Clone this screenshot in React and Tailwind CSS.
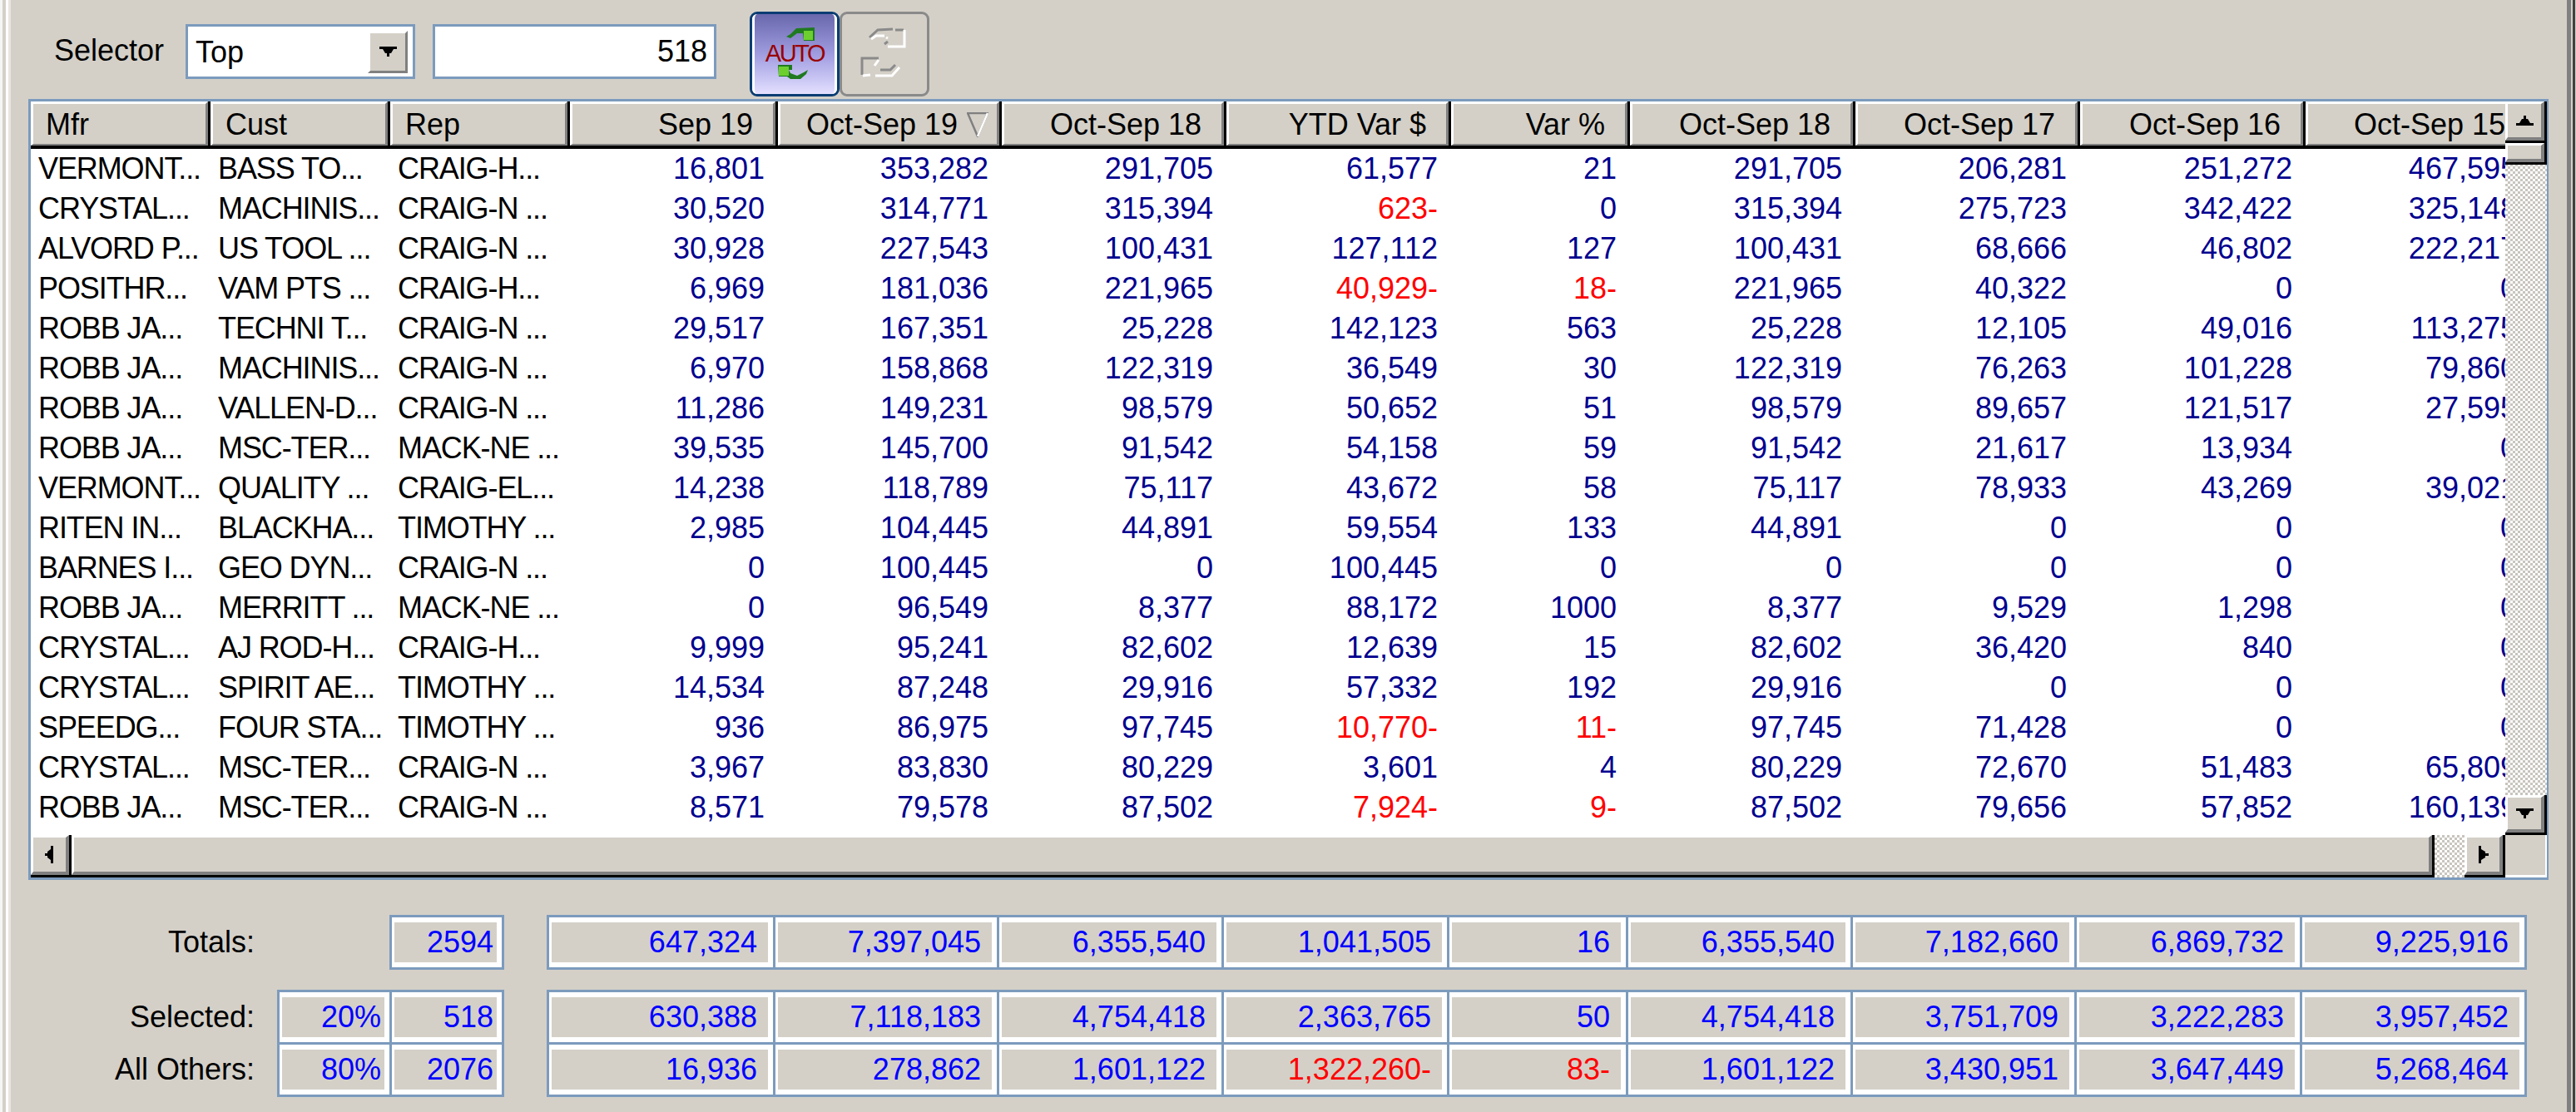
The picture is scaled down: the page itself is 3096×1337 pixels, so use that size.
import React from "react";

const headers = [
  ["Mfr", "l"], ["Cust", "l"], ["Rep", "l"], ["Sep 19", "r"], ["Oct-Sep 19", "s"], ["Oct-Sep 18", "r"],
  ["YTD Var $", "r"], ["Var %", "r"], ["Oct-Sep 18", "r"], ["Oct-Sep 17", "r"], ["Oct-Sep 16", "r"], ["Oct-Sep 15", "r"],
];

const rows = [
  ["VERMONT...", "BASS TO...", "CRAIG-H...", "16,801", "353,282", "291,705", "61,577", "21", "291,705", "206,281", "251,272", "467,595"],
  ["CRYSTAL...", "MACHINIS...", "CRAIG-N ...", "30,520", "314,771", "315,394", "623-", "0", "315,394", "275,723", "342,422", "325,148"],
  ["ALVORD P...", "US TOOL ...", "CRAIG-N ...", "30,928", "227,543", "100,431", "127,112", "127", "100,431", "68,666", "46,802", "222,217"],
  ["POSITHR...", "VAM PTS ...", "CRAIG-H...", "6,969", "181,036", "221,965", "40,929-", "18-", "221,965", "40,322", "0", "0"],
  ["ROBB JA...", "TECHNI T...", "CRAIG-N ...", "29,517", "167,351", "25,228", "142,123", "563", "25,228", "12,105", "49,016", "113,275"],
  ["ROBB JA...", "MACHINIS...", "CRAIG-N ...", "6,970", "158,868", "122,319", "36,549", "30", "122,319", "76,263", "101,228", "79,860"],
  ["ROBB JA...", "VALLEN-D...", "CRAIG-N ...", "11,286", "149,231", "98,579", "50,652", "51", "98,579", "89,657", "121,517", "27,595"],
  ["ROBB JA...", "MSC-TER...", "MACK-NE ...", "39,535", "145,700", "91,542", "54,158", "59", "91,542", "21,617", "13,934", "0"],
  ["VERMONT...", "QUALITY ...", "CRAIG-EL...", "14,238", "118,789", "75,117", "43,672", "58", "75,117", "78,933", "43,269", "39,021"],
  ["RITEN IN...", "BLACKHA...", "TIMOTHY ...", "2,985", "104,445", "44,891", "59,554", "133", "44,891", "0", "0", "0"],
  ["BARNES I...", "GEO DYN...", "CRAIG-N ...", "0", "100,445", "0", "100,445", "0", "0", "0", "0", "0"],
  ["ROBB JA...", "MERRITT ...", "MACK-NE ...", "0", "96,549", "8,377", "88,172", "1000", "8,377", "9,529", "1,298", "0"],
  ["CRYSTAL...", "AJ ROD-H...", "CRAIG-H...", "9,999", "95,241", "82,602", "12,639", "15", "82,602", "36,420", "840", "0"],
  ["CRYSTAL...", "SPIRIT AE...", "TIMOTHY ...", "14,534", "87,248", "29,916", "57,332", "192", "29,916", "0", "0", "0"],
  ["SPEEDG...", "FOUR STA...", "TIMOTHY ...", "936", "86,975", "97,745", "10,770-", "11-", "97,745", "71,428", "0", "0"],
  ["CRYSTAL...", "MSC-TER...", "CRAIG-N ...", "3,967", "83,830", "80,229", "3,601", "4", "80,229", "72,670", "51,483", "65,809"],
  ["ROBB JA...", "MSC-TER...", "CRAIG-N ...", "8,571", "79,578", "87,502", "7,924-", "9-", "87,502", "79,656", "57,852", "160,139"],
];

const gridCols = "grid grid-cols-[216px_216px_216px_250px_269px_270px_270px_215px_271px_270px_271px_270px]";
const dataWidths = ["w-[272px]", "w-[269px]", "w-[270px]", "w-[271px]", "w-[215px]", "w-[270px]", "w-[269px]", "w-[271px]", "w-[270px]"];

function Tri({ dir, className }) {
  const pts = {
    up: "0,12 21,12 21,9 17,9 14,4 12,4 12,0 9,0 9,4 7,4 4,9 0,9",
    down: "0,0 21,0 21,3 17,3 14,8 12,8 12,12 9,12 9,8 7,8 4,3 0,3",
  };
  if (dir === "left")
    return (
      <svg width="11" height="21" viewBox="0 0 11 21" className={className}>
        <polygon points="10,0 10,21 7,21 7,17 3,14 3,12 0,12 0,9 3,9 3,7 7,4 7,0" fill="#000" />
      </svg>
    );
  if (dir === "right")
    return (
      <svg width="12" height="21" viewBox="0 0 12 21" className={className}>
        <polygon points="0,0 0,21 3,21 3,17 8,14 8,12 12,12 12,9 8,9 8,7 3,4 3,0" fill="#000" />
      </svg>
    );
  return (
    <svg width="21" height="12" viewBox="0 0 21 12" className={className}>
      <polygon points={pts[dir]} fill="#000" />
    </svg>
  );
}

function Header({ label, kind }) {
  const align =
    kind === "l" ? "justify-start pl-[15px]" : kind === "s" ? "justify-end pr-[10px]" : "justify-end pr-[24px]";
  return (
    <div className="h-[57px] border-r-[3px] border-b-[4px] border-black">
      <div className={`h-full flex items-center pt-[2px] ${align} border-t-[3px] border-l-[3px] border-r-[3px] border-b-[2px] border-t-white border-l-white border-r-[#808080] border-b-[#808080] bg-[#d4d0c8]`}>
        <span>{label}</span>
        {kind === "s" && (
          <svg width="26" height="30" viewBox="0 0 26 30" className="ml-[11px] shrink-0">
            <polygon points="1,1 25,1 13,29" fill="none" stroke="#808080" strokeWidth="2.5" />
            <polyline points="25,1 13,29" fill="none" stroke="#ffffff" strokeWidth="2.5" />
          </svg>
        )}
      </div>
    </div>
  );
}

function Row({ cells }) {
  return (
    <div className={`${gridCols} h-12 leading-[48px]`}>
      {cells.map((c, i) => {
        if (i < 3)
          return (
            <div key={i} className="pl-[9px] text-black tracking-[-1.1px] whitespace-nowrap overflow-hidden">
              {c}
            </div>
          );
        const red = (i === 6 || i === 7) && c.endsWith("-");
        return (
          <div key={i} className={`pr-[16px] text-right whitespace-nowrap ${red ? "text-[#ff0000]" : "text-[#00008f]"}`}>
            {c}
          </div>
        );
      })}
    </div>
  );
}

function Cell({ value, width, red, tight }) {
  return (
    <div className={`${width} h-[60px] border-r-[3px] border-[#7c9bbd] shrink-0`}>
      <div className={`h-full border-t-[6px] border-b-[6px] border-l-[3px] border-r-[6px] border-white bg-[#d4d0c8] flex items-center justify-end leading-none whitespace-nowrap ${tight ? "pr-[4px]" : "pr-[13px]"}`}>
        <span className={red ? "text-[#ff0000]" : "text-[#0000ff]"}>{value}</span>
      </div>
    </div>
  );
}

function BoxGroup({ rows, widths, tight }) {
  return (
    <div className="border-t-[3px] border-l-[3px] border-[#7c9bbd] shrink-0">
      {rows.map((r, i) => (
        <div key={i} className="flex border-b-[3px] border-[#7c9bbd]">
          {r.map((v, j) => (
            <Cell key={j} value={v} width={widths[j]} red={v.endsWith("-")} tight={tight} />
          ))}
        </div>
      ))}
    </div>
  );
}

function ScrollButton({ dir, className }) {
  return (
    <div className={`border-r-[3px] border-b-[3px] border-black shrink-0 ${className}`}>
      <div className="h-full border-t-[3px] border-l-[3px] border-r-[4px] border-b-[4px] border-t-white border-l-white border-r-[#808080] border-b-[#808080] bg-[#d4d0c8] flex items-center justify-center">
        {dir && <Tri dir={dir} />}
      </div>
    </div>
  );
}

function AutoIcon() {
  return (
    <svg width="108" height="102" viewBox="901 14 108 102" className="absolute inset-0">
      <g>
        <path d="M945 44 L950 41 L957 34 L979 33 L979 49 L966 49 L965 40 L958 40 L950 46 Z" fill="#1f7a1f" />
        <rect x="966" y="37" width="11" height="11" fill="#6ccf2f" />
        <path d="M935 78 L952 78 L952 84 L948 84 L950 88 L958 91 L966 87 L971 84 L969 89 L962 95 L950 95 L946 92 L936 92 Z" fill="#1f7a1f" />
        <rect x="936" y="80" width="12" height="11" fill="#6ccf2f" />
      </g>
    </svg>
  );
}

function DisabledIcon() {
  return (
    <svg width="108" height="102" viewBox="1009 14 108 102" className="absolute inset-0">
      <g fill="none" strokeWidth="3">
        <path d="M1045 45 L1055 36 L1073 35" stroke="#8a8a8a" />
        <path d="M1076 36 L1086 36" stroke="#8a8a8a" />
        <path d="M1047 47 L1053 43 L1063 43" stroke="#ffffff" />
        <path d="M1065 45 L1067 46" stroke="#ffffff" />
        <path d="M1067 50 L1063 53" stroke="#8a8a8a" />
        <path d="M1087 36 L1087 56 L1067 56" stroke="#ffffff" />
        <path d="M1036 90 L1036 70 L1056 70" stroke="#8a8a8a" />
        <path d="M1037 91 L1046 90" stroke="#ffffff" />
        <path d="M1052 91 L1072 91 L1081 81" stroke="#ffffff" />
        <path d="M1058 84 L1070 84 L1076 78" stroke="#8a8a8a" />
        <path d="M1056 72 L1051 79" stroke="#ffffff" />
      </g>
    </svg>
  );
}

export default function App() {
  const wLeft = ["w-[135px]", "w-[135px]"];
  return (
    <div className="w-[3096px] h-[1337px] overflow-hidden flex bg-[#d4d0c8] font-['Liberation_Sans',sans-serif] text-[36px] text-black">
      {/* window frame, left */}
      <div className="w-[13px] shrink-0 flex">
        <div className="w-[3px] bg-[#f4f6f6]" />
        <div className="w-[4px] bg-[#d4d0c8]" />
        <div className="w-[3px] bg-white" />
        <div className="w-[3px] bg-[#e8e6e0]" />
      </div>

      <div className="w-[3072px] shrink-0 flex flex-col">
        {/* selector bar */}
        <div className="mt-[14px] h-[102px] flex items-center shrink-0">
          <span className="ml-[52px] w-[158px] -mt-[8px] leading-none">Selector</span>
          <div className="w-[276px] h-[66px] -mt-[6px] border-[3px] border-[#7c9bbd] bg-white flex items-center pl-[9px] pr-[6px]">
            <span className="flex-1 leading-none mt-[2px]">Top</span>
            <div className="w-[48px] h-[51px] border-l-[3px] border-t-[3px] border-r-[3px] border-b-[3px] border-l-white border-t-white border-r-[#808080] border-b-[#808080] flex items-center justify-center bg-[#d4d0c8]">
              <Tri dir="down" />
            </div>
          </div>
          <div className="ml-[21px] w-[341px] h-[66px] -mt-[6px] border-[3px] border-[#7c9bbd] bg-white flex items-center justify-end pr-[8px] leading-none">
            518
          </div>
          <div className="ml-[40px] w-[108px] h-[102px] relative rounded-[9px] border-[3px] border-[#0a3d73] shrink-0 bg-[#d4d0c8]">
            <div className="h-full rounded-[6px] border-x-[3px] border-white bg-linear-to-b from-[#6a68ad] via-[#a09ce0] to-[#e4e0ff]" />
            <div className="absolute -inset-[3px]">
              <AutoIcon />
            </div>
            <div className="absolute inset-x-0 top-[33px] text-center text-[29px] leading-[29px] tracking-[-2.4px] text-[#990000]">
              AUTO
            </div>
          </div>
          <div className="w-[108px] h-[102px] relative rounded-[9px] border-[3px] border-[#8a8a8a] shrink-0">
            <div className="absolute -inset-[3px]">
              <DisabledIcon />
            </div>
          </div>
        </div>

        {/* table */}
        <div className="mt-[3px] ml-[21px] w-[3029px] h-[939px] shrink-0 border-[3px] border-r-[2px] border-[#7c9bbd] flex flex-col">
          <div className="h-[882px] flex shrink-0">
            <div className="w-[2974px] shrink-0 overflow-hidden bg-white">
              <div className={gridCols}>
                {headers.map(([l, k], i) => (
                  <Header key={i} label={l} kind={k} />
                ))}
              </div>
              {rows.map((r, i) => (
                <Row key={i} cells={r} />
              ))}
            </div>
            <div className="w-[50px] shrink-0 flex flex-col bg-[repeating-conic-gradient(#c8c5be_0_25%,#ffffff_0_50%)] bg-[length:6px_6px]">
              <ScrollButton dir="up" className="h-[50px]" />
              <ScrollButton className="h-[26px]" />
              <div className="flex-1" />
              <ScrollButton dir="down" className="h-[48px]" />
            </div>
          </div>
          <div className="h-[51px] flex shrink-0">
            <ScrollButton dir="left" className="w-[49px]" />
            <ScrollButton className="w-[2840px]" />
            <div className="w-[36px] shrink-0 bg-[repeating-conic-gradient(#c8c5be_0_25%,#ffffff_0_50%)] bg-[length:6px_6px]" />
            <ScrollButton dir="right" className="w-[49px]" />
            <div className="flex-1 border-r-[2px] border-b-[3px] border-white" />
          </div>
        </div>

        {/* totals */}
        <div className="mt-[42px] flex shrink-0 h-[66px] items-start">
          <div className="w-[293px] text-right leading-none h-[66px] flex items-center justify-end shrink-0">Totals:</div>
          <div className="ml-[162px]">
            <BoxGroup rows={[["2594"]]} widths={["w-[135px]"]} tight />
          </div>
          <div className="ml-[51px]">
            <BoxGroup rows={[["647,324", "7,397,045", "6,355,540", "1,041,505", "16", "6,355,540", "7,182,660", "6,869,732", "9,225,916"]]} widths={dataWidths} />
          </div>
        </div>

        <div className="mt-[24px] flex shrink-0 items-start">
          <div className="w-[293px] shrink-0 text-right leading-none">
            <div className="h-[66px] flex items-center justify-end">Selected:</div>
            <div className="h-[60px] flex items-center justify-end">All Others:</div>
          </div>
          <div className="ml-[27px]">
            <BoxGroup rows={[["20%", "518"], ["80%", "2076"]]} widths={wLeft} tight />
          </div>
          <div className="ml-[51px]">
            <BoxGroup
              rows={[
                ["630,388", "7,118,183", "4,754,418", "2,363,765", "50", "4,754,418", "3,751,709", "3,222,283", "3,957,452"],
                ["16,936", "278,862", "1,601,122", "1,322,260-", "83-", "1,601,122", "3,430,951", "3,647,449", "5,268,464"],
              ]}
              widths={dataWidths}
            />
          </div>
        </div>
      </div>

      {/* window frame, right */}
      <div className="w-[11px] shrink-0 flex">
        <div className="w-[5px] bg-[#808080]" />
        <div className="w-[2px] bg-[#d4d0c8]" />
        <div className="w-[3px] bg-[#404040]" />
        <div className="w-[1px] bg-[#d4d0c8]" />
      </div>
    </div>
  );
}
